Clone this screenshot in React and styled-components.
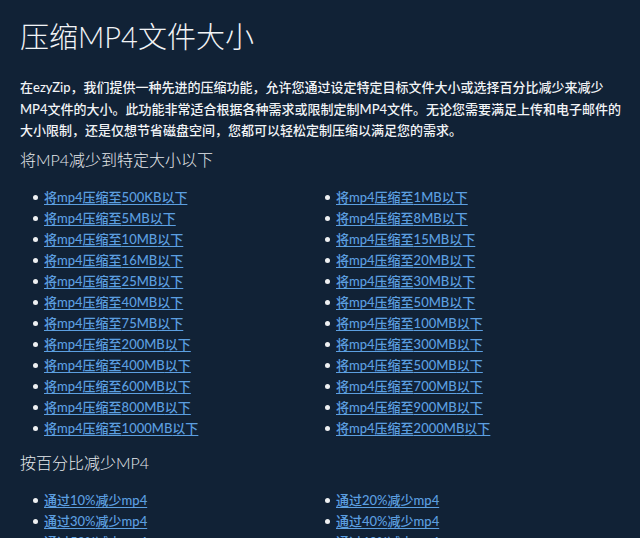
import React from "react";
import styled, { createGlobalStyle } from "styled-components";

const Global = createGlobalStyle`
  html, body { margin: 0; padding: 0; background: #112236; }
  body { font-family: "Lato", "Noto Sans CJK SC", sans-serif; color: #eef0f2; }
`;

const Page = styled.main`
  padding: 0 13px 0 20px;
  min-height: 538px;
  box-sizing: border-box;
  overflow: hidden;
`;

const Title = styled.h1`
  margin: 19px 0 0;
  font-size: 29px;
  line-height: 36px;
  font-weight: 300;
  color: #f2f4f6;
`;

const Intro = styled.p`
  margin: 22px 0 0;
  font-size: 13px;
  line-height: 21.5px;
  font-weight: 500;
  color: #f2f4f6;
`;

const SubTitle = styled.h2`
  margin: ${(p) => p.$top}px 0 0;
  font-size: 16px;
  line-height: 22px;
  font-weight: 300;
  color: #e6e9ec;
`;

const LinkList = styled.ul`
  list-style: none;
  margin: 16.5px 0 0;
  padding: 0 0 0 24px;
  display: grid;
  grid-template-columns: 292px 1fr;
`;

const Item = styled.li`
  position: relative;
  font-size: 13px;
  line-height: 21px;
  font-weight: 500;
  &::before {
    content: "";
    position: absolute;
    left: -11px;
    top: 8px;
    width: 5px;
    height: 5px;
    border-radius: 50%;
    background: #eef0f2;
  }
`;

const Link = styled.a`
  color: #5c9fe0;
  text-decoration: underline;
  text-underline-offset: 2px;
`;

const sizes = [
  "500KB", "1MB", "5MB", "8MB", "10MB", "15MB", "16MB", "20MB",
  "25MB", "30MB", "40MB", "50MB", "75MB", "100MB", "200MB", "300MB",
  "400MB", "500MB", "600MB", "700MB", "800MB", "900MB", "1000MB", "2000MB",
];

const percents = ["10%", "20%", "30%", "40%", "50%", "60%"];

export default function App() {
  return (
    <>
      <Global />
      <Page>
        <Title>压缩MP4文件大小</Title>
        <Intro>
          在ezyZip，我们提供一种先进的压缩功能，允许您通过设定特定目标文件大小或选择百分比减少来减少MP4文件的大小。此功能非常适合根据各种需求或限制定制MP4文件。无论您需要满足上传和电子邮件的大小限制，还是仅想节省磁盘空间，您都可以轻松定制压缩以满足您的需求。
        </Intro>
        <SubTitle $top={7}>将MP4减少到特定大小以下</SubTitle>
        <LinkList>
          {sizes.map((s) => (
            <Item key={s}>
              <Link href="#">将mp4压缩至{s}以下</Link>
            </Item>
          ))}
        </LinkList>
        <SubTitle $top={12.5}>按百分比减少MP4</SubTitle>
        <LinkList>
          {percents.map((p) => (
            <Item key={p}>
              <Link href="#">通过{p}减少mp4</Link>
            </Item>
          ))}
        </LinkList>
      </Page>
    </>
  );
}
